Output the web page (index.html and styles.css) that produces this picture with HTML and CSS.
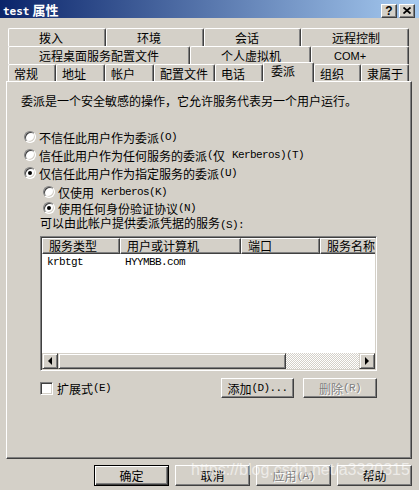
FILE: index.html
```html
<!DOCTYPE html>
<html lang="zh-CN">

<head>
    <meta charset="UTF-8">
    <title>test 属性</title>
    <link rel="stylesheet" href="styles.css">
</head>

<body>
    <div class="dialog">
        <div class="titlebar">
            <span class="title"><span class="title-en">test</span> 属性</span>
            <div class="caption-buttons">
                <span class="cap-btn cap-help">?</span>
                <span class="cap-btn">
                    <svg width="8" height="7" viewBox="0 0 8 7">
                        <path d="M0.5 0.5 L7.5 6.5 M7.5 0.5 L0.5 6.5" stroke="#000" stroke-width="1.8" fill="none" />
                    </svg>
                </span>
            </div>
        </div>

        <!-- Tabs -->
        <div class="tabs">
            <div class="tab-row">
                <div class="tab w98">拨入</div>
                <div class="tab w98">环境</div>
                <div class="tab w97">会话</div>
                <div class="tab w108">远程控制</div>
            </div>
            <div class="tab-row">
                <div class="tab w182">远程桌面服务配置文件</div>
                <div class="tab w121">个人虚拟机</div>
                <div class="tab w98 tab-com">COM+</div>
            </div>
            <div class="tab-row front">
                <div class="tab w48">常规</div>
                <div class="tab w49">地址</div>
                <div class="tab w49">帐户</div>
                <div class="tab w61">配置文件</div>
                <div class="tab w48">电话</div>
                <div class="tab w51 active">委派</div>
                <div class="tab w47">组织</div>
                <div class="tab w48">隶属于</div>
            </div>
        </div>

        <div class="panel">
            <p class="desc">委派是一个安全敏感的操作，它允许服务代表另一个用户运行。</p>

            <div class="options">
                <div class="opt"><span class="radio"></span>不信任此用户作为委派<span class="en">(O)</span></div>
                <div class="opt"><span class="radio"></span>信任此用户作为任何服务的委派<span class="en">(</span>仅<span class="en gap">Kerberos)(T)</span></div>
                <div class="opt"><span class="radio checked"></span>仅信任此用户作为指定服务的委派<span class="en">(U)</span></div>
            </div>

            <div class="sub-options">
                <div class="opt sub"><span class="radio"></span>仅使用<span class="en gap">Kerberos(K)</span></div>
                <div class="opt sub"><span class="radio checked"></span>使用任何身份验证协议<span class="en">(N)</span></div>
            </div>

            <div class="list-label">可以由此帐户提供委派凭据的服务<span class="en">(S):</span></div>

            <div class="listview">
                <div class="lv-header">
                    <div class="lv-col c1">服务类型</div>
                    <div class="lv-col c2">用户或计算机</div>
                    <div class="lv-col c3">端口</div>
                    <div class="lv-col c4">服务名称</div>
                </div>
                <div class="lv-body">
                    <div class="lv-row">
                        <div class="lv-cell c1 en">krbtgt</div>
                        <div class="lv-cell c2 en">HYYMBB.com</div>
                    </div>
                </div>
                <div class="hscroll">
                    <span class="sb-btn"><span class="arrow-left"></span></span>
                    <span class="sb-thumb"></span>
                    <span class="sb-track"></span>
                    <span class="sb-btn"><span class="arrow-right"></span></span>
                </div>
            </div>

            <div class="list-actions">
                <label class="check"><span class="checkbox"></span>扩展式<span class="en">(E)</span></label>
                <div class="btn-group">
                    <span class="button add">添加<span class="en">(D)...</span></span>
                    <span class="button disabled del">删除<span class="en">(R)</span></span>
                </div>
            </div>
        </div>

        <div class="footer">
            <span class="button default">确定</span>
            <span class="button">取消</span>
            <span class="button disabled">应用<span class="en">(A)</span></span>
            <span class="button">帮助</span>
        </div>

        <div class="watermark">https://blog.csdn.net/a3320315</div>
    </div>
</body>

</html>
```

FILE: styles.css
```css
/* Classic dialog */
body {
    margin: 0;
    background-color: #d4d0c8;
    font-family: "Noto Sans CJK SC", sans-serif;
    font-size: 12px;
    color: #000;
}

.dialog {
    position: relative;
    width: 419px;
    height: 490px;
    overflow: hidden;
}

.en {
    font-family: "Liberation Mono", monospace;
    font-size: 11px;
    letter-spacing: -0.6px;
}

.en.gap {
    margin-left: 7px;
}

/* Title bar */
.titlebar {
    height: 18px;
    display: flex;
    align-items: center;
    justify-content: space-between;
    padding: 0 4px 0 3px;
    background: linear-gradient(to right, #0a246a, #a6caf0);
}

.title {
    color: #fff;
    font-weight: bold;
    font-size: 13px;
    line-height: 14px;
    padding-top: 3px;
}

.title-en {
    font-family: "DejaVu Sans Mono", monospace;
    font-size: 11px;
}

.caption-buttons {
    display: flex;
    gap: 2px;
    padding-top: 3px;
}

.cap-btn {
    box-sizing: border-box;
    width: 16px;
    height: 14px;
    display: flex;
    align-items: center;
    justify-content: center;
    background: #d4d0c8;
    border: 1px solid;
    border-color: #fff #404040 #404040 #fff;
    box-shadow: inset -1px -1px 0 #808080;
}

.cap-help {
    font-family: "Liberation Sans", sans-serif;
    font-weight: bold;
    font-size: 12px;
    line-height: 12px;
}

/* Tabs */
.tabs {
    margin-top: 10px;
    padding-left: 8px;
}

.tab-row {
    display: flex;
    height: 18px;
}

.tab-row.front {
    height: 17px;
}

.tab {
    box-sizing: border-box;
    height: 100%;
    padding: 1px 0 0 30px;
    line-height: 16px;
    white-space: nowrap;
    border-top: 1px solid #fff;
    border-left: 1px solid #fff;
    border-right: 1px solid #404040;
    border-top-left-radius: 2px;
    border-top-right-radius: 2px;
    box-shadow: inset -1px 0 0 #808080;
    background: #d4d0c8;
}

.tab-com {
    padding-left: 22px;
    font-family: "Liberation Sans", sans-serif;
    font-size: 11px;
}

.front .tab {
    padding-left: 5px;
}

.front .tab.active {
    position: relative;
    z-index: 1;
    height: 20px;
    margin-top: -2px;
    padding-left: 7px;
    padding-top: 0;
}

.w47 { width: 47px; }
.w48 { width: 48px; }
.w49 { width: 49px; }
.w51 { width: 51px; }
.w61 { width: 61px; }
.w97 { width: 97px; }
.w98 { width: 98px; }
.w108 { width: 108px; }
.w121 { width: 121px; }
.w182 { width: 182px; }

/* Panel */
.panel {
    box-sizing: border-box;
    width: 406px;
    height: 378px;
    margin-left: 6px;
    border: 1px solid;
    border-color: #fff #404040 #404040 #fff;
    box-shadow: inset -1px -1px 0 #808080;
}

.desc {
    margin: 12px 0 0 14px;
    line-height: 14px;
}

.options {
    margin-top: 20px;
}

.opt {
    display: flex;
    align-items: center;
    height: 18px;
    margin-left: 17px;
    white-space: nowrap;
}

.sub-options {
    margin-top: 2px;
}

.opt.sub {
    height: 16px;
    margin-left: 36px;
}

.radio {
    position: relative;
    box-sizing: border-box;
    width: 12px;
    height: 12px;
    margin-right: 3px;
    flex-shrink: 0;
    border-radius: 50%;
    background: #fff;
    border: 1px solid;
    border-color: #808080 #fff #fff #808080;
    box-shadow: inset 1px 1px 0 #404040, inset -1px -1px 0 #d4d0c8;
}

.radio.checked::after {
    content: "";
    position: absolute;
    left: 3px;
    top: 3px;
    width: 4px;
    height: 4px;
    border-radius: 50%;
    background: #000;
}

.list-label {
    margin-left: 33px;
    line-height: 14px;
}

/* List view */
.listview {
    box-sizing: border-box;
    width: 337px;
    height: 135px;
    margin: 4px 0 0 33px;
    display: flex;
    flex-direction: column;
    background: #fff;
    border: 1px solid;
    border-color: #808080 #fff #fff #808080;
    box-shadow: inset 1px 1px 0 #404040, inset -1px -1px 0 #d4d0c8;
    padding: 1px;
}

.lv-header {
    display: flex;
    height: 16px;
    overflow: hidden;
    flex-shrink: 0;
}

.lv-col {
    box-sizing: border-box;
    flex-shrink: 0;
    padding-left: 6px;
    line-height: 14px;
    white-space: nowrap;
    background: #d4d0c8;
    border-top: 1px solid #fff;
    border-left: 1px solid #fff;
    border-right: 1px solid #404040;
    border-bottom: 1px solid #404040;
    box-shadow: inset -1px -1px 0 #808080;
}

.c1 { width: 78px; }
.c2 { width: 121px; }
.c3 { width: 79px; }
.c4 { width: 80px; }

.lv-body {
    flex: 1;
}

.lv-row {
    display: flex;
    height: 16px;
    align-items: center;
}

.lv-cell {
    padding-left: 5px;
    box-sizing: border-box;
}

/* Scrollbar */
.hscroll {
    display: flex;
    height: 16px;
    flex-shrink: 0;
}

.sb-btn,
.sb-thumb {
    box-sizing: border-box;
    height: 16px;
    background: #d4d0c8;
    border: 1px solid;
    border-color: #d4d0c8 #404040 #404040 #d4d0c8;
    box-shadow: inset 1px 1px 0 #fff, inset -1px -1px 0 #808080;
}

.sb-btn {
    width: 16px;
    display: flex;
    align-items: center;
    justify-content: center;
}

.sb-thumb {
    width: 228px;
}

.sb-track {
    flex: 1;
    background: repeating-conic-gradient(#fff 0 25%, #d4d0c8 0 50%) 0 0 / 2px 2px;
}

.arrow-left {
    width: 0;
    height: 0;
    border-top: 4px solid transparent;
    border-bottom: 4px solid transparent;
    border-right: 4px solid #000;
}

.arrow-right {
    width: 0;
    height: 0;
    border-top: 4px solid transparent;
    border-bottom: 4px solid transparent;
    border-left: 4px solid #000;
}

/* Checkbox + buttons under list */
.list-actions {
    width: 337px;
    height: 20px;
    margin: 7px 0 0 33px;
    display: flex;
    align-items: center;
    justify-content: space-between;
}

.check {
    display: flex;
    align-items: center;
}

.checkbox {
    box-sizing: border-box;
    width: 13px;
    height: 13px;
    margin-right: 4px;
    background: #fff;
    border: 1px solid;
    border-color: #808080 #fff #fff #808080;
    box-shadow: inset 1px 1px 0 #404040, inset -1px -1px 0 #d4d0c8;
}

.btn-group {
    display: flex;
    gap: 9px;
}

.button {
    box-sizing: border-box;
    width: 75px;
    height: 21px;
    display: flex;
    align-items: center;
    justify-content: center;
    background: #d4d0c8;
    border: 1px solid;
    border-color: #fff #404040 #404040 #fff;
    box-shadow: inset -1px -1px 0 #808080;
}

.button.add {
    width: 73px;
    height: 20px;
}

.button.del {
    width: 74px;
    height: 20px;
}

.button.default {
    border-color: #000;
    box-shadow: inset 1px 1px 0 #fff, inset -1px -1px 0 #404040, inset -2px -2px 0 #808080;
}

.button.disabled {
    color: #808080;
    text-shadow: 1px 1px 0 #fff;
}

/* Footer */
.footer {
    display: flex;
    justify-content: flex-end;
    gap: 6px;
    margin-top: 6px;
    padding-right: 7px;
}

.watermark {
    position: absolute;
    left: 191px;
    top: 461px;
    font-family: "Liberation Sans", sans-serif;
    font-size: 16px;
    color: rgba(255, 255, 255, 0.6);
    white-space: nowrap;
}
```
